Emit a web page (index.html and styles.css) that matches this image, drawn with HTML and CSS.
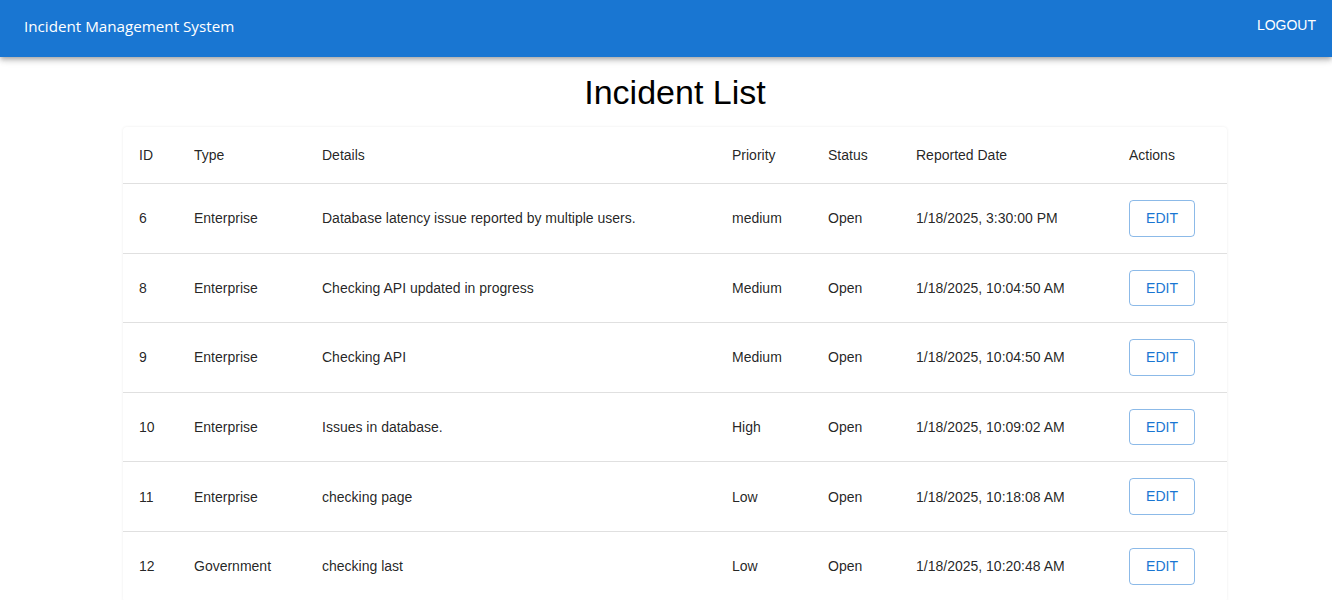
FILE: index.html
```html
<!DOCTYPE html>
<html lang="en">
<head>
<meta charset="utf-8">
<title>Incident Management System</title>
<link rel="stylesheet" href="styles.css">
</head>
<body>
<header class="appbar">
  <div class="brand">Incident Management System</div>
  <button class="logout">LOGOUT</button>
</header>
<main class="content">
  <h1 class="page-title">Incident List</h1>
  <div class="card">
    <table class="grid">
      <colgroup>
        <col class="c-id"><col class="c-type"><col class="c-details"><col class="c-priority"><col class="c-status"><col class="c-date"><col class="c-actions">
      </colgroup>
      <thead>
        <tr><th>ID</th><th>Type</th><th>Details</th><th>Priority</th><th>Status</th><th>Reported Date</th><th>Actions</th></tr>
      </thead>
      <tbody>
        <tr><td>6</td><td>Enterprise</td><td>Database latency issue reported by multiple users.</td><td>medium</td><td>Open</td><td>1/18/2025, 3:30:00 PM</td><td><button class="edit">EDIT</button></td></tr>
        <tr><td>8</td><td>Enterprise</td><td>Checking API updated in progress</td><td>Medium</td><td>Open</td><td>1/18/2025, 10:04:50 AM</td><td><button class="edit">EDIT</button></td></tr>
        <tr><td>9</td><td>Enterprise</td><td>Checking API</td><td>Medium</td><td>Open</td><td>1/18/2025, 10:04:50 AM</td><td><button class="edit">EDIT</button></td></tr>
        <tr><td>10</td><td>Enterprise</td><td>Issues in database.</td><td>High</td><td>Open</td><td>1/18/2025, 10:09:02 AM</td><td><button class="edit">EDIT</button></td></tr>
        <tr><td>11</td><td>Enterprise</td><td>checking page</td><td>Low</td><td>Open</td><td>1/18/2025, 10:18:08 AM</td><td><button class="edit">EDIT</button></td></tr>
        <tr><td>12</td><td>Government</td><td>checking last</td><td>Low</td><td>Open</td><td>1/18/2025, 10:20:48 AM</td><td><button class="edit">EDIT</button></td></tr>
      </tbody>
    </table>
  </div>
</main>
</body>
</html>
```
FILE: styles.css
```css
* { box-sizing: border-box; }
html, body { margin: 0; padding: 0; background: #fff; }
body { font-family: "Liberation Sans", Arial, sans-serif; color: rgba(0,0,0,0.87); }

.appbar {
  height: 57px;
  background: #1976d2;
  color: #fff;
  display: flex;
  align-items: center;
  justify-content: space-between;
  padding: 0 16px 6px 24px;
  box-shadow: 0 2px 4px -1px rgba(0,0,0,0.2), 0 4px 5px 0 rgba(0,0,0,0.14), 0 1px 10px 0 rgba(0,0,0,0.12);
  position: relative;
  z-index: 1;
}
.brand {
  font-family: "Open Sans", "Noto Sans", sans-serif;
  font-size: 15.2px;
}
.logout {
  background: none;
  border: 0;
  padding: 0;
  color: #fff;
  font-family: "Liberation Sans", Arial, sans-serif;
  font-size: 14px;
  font-weight: 500;
  margin-top: -2px;
}

.content { padding: 15px 0 0 18px; }
.page-title {
  margin: 0 0 13px;
  text-align: center;
  font-size: 34px;
  font-weight: 400;
  line-height: 1.235;
  color: #000;
}

.card {
  width: 1104px;
  margin: 0 auto;
  background: #fff;
  border-radius: 4px;
  box-shadow: 0 0 3px rgba(0,0,0,0.08);
  overflow: hidden;
}
.grid {
  width: 100%;
  border-collapse: collapse;
  table-layout: fixed;
  font-size: 14px;
}
.c-id { width: 55px; }
.c-type { width: 128px; }
.c-details { width: 410px; }
.c-priority { width: 96px; }
.c-status { width: 88px; }
.c-date { width: 213px; }
.c-actions { width: 114px; }

.grid th, .grid td {
  text-align: left;
  padding: 16px;
  border-bottom: 1px solid #e0e0e0;
  line-height: 24px;
  font-weight: 400;
  color: rgba(0,0,0,0.87);
  vertical-align: middle;
}
.grid thead th { height: 56px; }
.grid tbody td { height: 69.6px; }

.edit {
  background: transparent;
  border: 1px solid rgba(25,118,210,0.5);
  border-radius: 4px;
  color: #1976d2;
  font-family: "Liberation Sans", Arial, sans-serif;
  font-size: 14px;
  font-weight: 500;
  line-height: 24.5px;
  padding: 5px 15px;
  min-width: 64px;
  width: 66px;
  cursor: pointer;
}
```
